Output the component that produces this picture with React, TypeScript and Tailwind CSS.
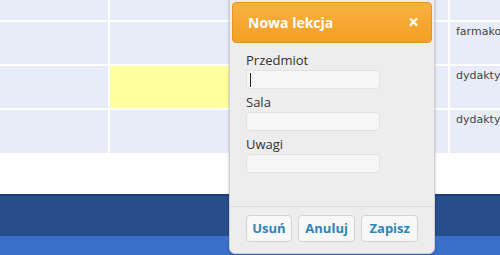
import React from 'react';

const rows = [
  { h: 'h-[20px]', c: ['', '', '', ''] },
  { h: 'h-[42px]', c: ['', '', '', 'farmakologia'] },
  { h: 'h-[42px]', c: ['', 'yellow', '', 'dydaktyka'] },
  { h: 'h-[43px]', c: ['', '', '', 'dydaktyka'] },
];

const buttons = [
  { label: 'Usuń', w: 'w-[47px]' },
  { label: 'Anuluj', w: 'w-[59px]' },
  { label: 'Zapisz', w: 'w-[58px]' },
];

const Field: React.FC<{ label: string; focused?: boolean }> = ({ label, focused }) => (
  <div className="flex flex-col">
    <label className="text-[13px] leading-[18px] text-[#333]">{label}</label>
    <div className="mt-[1px] h-[19px] w-[134px] rounded-[4px] border border-[#e2e2e2] bg-[#f6f6f6] flex items-center pl-[3px]">
      {focused && <span className="block h-[14px] w-px bg-[#222]" />}
    </div>
  </div>
);

const App: React.FC = () => {
  return (
    <div className="relative h-[255px] w-[500px] overflow-hidden bg-white font-['Open_Sans',sans-serif]">
      {/* schedule table */}
      <div className="grid grid-cols-[108px_220px_116px_1fr] gap-[2px] bg-white">
        {rows.map((r, i) =>
          r.c.map((cell, j) => (
            <div
              key={`${i}-${j}`}
              className={`${r.h} overflow-hidden whitespace-nowrap pl-[6px] pt-[3px] font-['DejaVu_Sans',sans-serif] text-[11px] leading-[14px] text-[#444] ${
                cell === 'yellow' ? 'bg-[#ffff9f]' : 'bg-[#e7ecf8]'
              }`}
            >
              {cell !== 'yellow' ? cell : ''}
            </div>
          ))
        )}
      </div>

      {/* footer bands */}
      <div className="mt-[41px] h-[2px] bg-[#1b3d72]" />
      <div className="h-[40px] bg-[#264e8a]" />
      <div className="h-[19px] bg-[#3a70c8]" />

      {/* popup */}
      <div className="absolute left-[229px] top-[-4px] flex h-[258px] w-[206px] flex-col rounded-b-[6px] border border-[#d0d0d0] bg-[#ededed] shadow-[0_1px_3px_rgba(0,0,0,0.25)]">
        <div className="mx-[2px] mt-[5px] flex h-[41px] items-center justify-between rounded-[4px] border border-[#e6951f] bg-gradient-to-b from-[#f9b040] to-[#f49f22] pl-[15px] pr-[12px]">
          <span className="text-[14px] font-bold text-white">Nowa lekcja</span>
          <span className="text-[19px] font-bold leading-none text-white">×</span>
        </div>
        <div className="flex flex-col gap-[4px] pl-[16px] pt-[8px]">
          <Field label="Przedmiot" focused />
          <Field label="Sala" />
          <Field label="Uwagi" />
        </div>
        <div className="mt-auto border-t border-[#dadada] px-[16px] pt-[8px] pb-[11px]">
          <div className="flex gap-[6px]">
            {buttons.map((b) => (
              <button
                key={b.label}
                className={`${b.w} h-[27px] rounded-[4px] border border-[#d4d4d4] bg-[#f8f8f8] text-[13px] font-bold text-[#2a86b8]`}
              >
                {b.label}
              </button>
            ))}
          </div>
        </div>
      </div>
    </div>
  );
};

export default App;
